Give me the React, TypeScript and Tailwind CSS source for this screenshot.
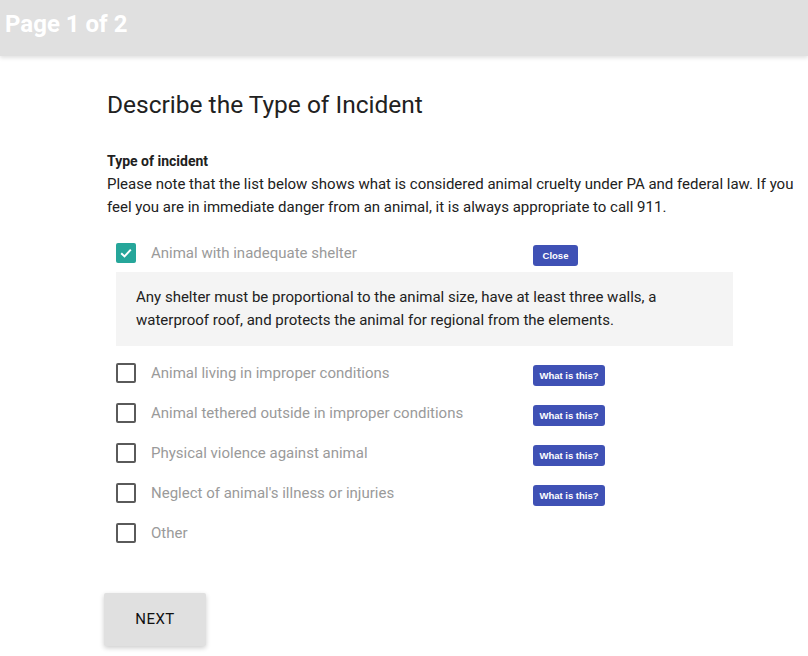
import React, { useState } from 'react';

const options = [
  {
    label: 'Animal with inadequate shelter',
    info: 'Any shelter must be proportional to the animal size, have at least three walls, a waterproof roof, and protects the animal for regional from the elements.',
  },
  { label: 'Animal living in improper conditions', info: 'Details about improper living conditions.' },
  { label: 'Animal tethered outside in improper conditions', info: 'Details about tethering.' },
  { label: 'Physical violence against animal', info: 'Details about physical violence.' },
  { label: "Neglect of animal's illness or injuries", info: 'Details about neglect.' },
  { label: 'Other', info: '' },
];

const App: React.FC = () => {
  const [checked, setChecked] = useState<boolean[]>([true, false, false, false, false, false]);
  const [open, setOpen] = useState<number | null>(0);

  const toggle = (i: number) => setChecked(prev => prev.map((v, j) => (j === i ? !v : v)));

  return (
    <div className="min-h-[656px] bg-white font-['Roboto',sans-serif]">
      <div className="h-[56px] bg-[#e0e0e0] shadow-[0_2px_4px_rgba(0,0,0,0.12)] flex items-center px-[5px]">
        <h1 className="text-white font-bold text-[24px] leading-none -mt-[8px]">Page 1 of 2</h1>
      </div>

      <div className="pl-[107px] pr-[12px]">
        <h2 className="text-[24.5px] text-[#212121] mt-[34px] leading-[30px]">Describe the Type of Incident</h2>

        <div className="mt-[31px] text-[15px] text-[#212121]">
          <p className="font-bold text-[14px] leading-[20px]">Type of incident</p>
          <p className="leading-[23px] mt-[2px]">
            Please note that the list below shows what is considered animal cruelty under PA and federal law. If you feel you are in immediate danger from an animal, it is always appropriate to call 911.
          </p>
        </div>

        <div className="mt-[14px] pl-[9px] w-[626px]">
          {options.map((o, i) => (
            <div key={o.label}>
              <div className="h-[40px] flex items-center">
                <button
                  onClick={() => toggle(i)}
                  className={`w-[20px] h-[20px] rounded-[2px] flex items-center justify-center ${checked[i] ? 'bg-[#26a69a]' : 'border-2 border-[#5a5a5a]'}`}
                >
                  {checked[i] && (
                    <svg width="14" height="14" viewBox="0 0 14 14" fill="none">
                      <path d="M2.2 7.3 L5.5 10.4 L11.8 3.6" stroke="white" strokeWidth="2" />
                    </svg>
                  )}
                </button>
                <span className="ml-[15px] text-[15px] text-[#9a9a9a] w-[382px]">{o.label}</span>
                {o.info && (
                  <button
                    onClick={() => setOpen(open === i ? null : i)}
                    className={`h-[21px] rounded-[3px] bg-[#3f51b5] text-white text-[9.5px] font-bold leading-none mt-[5px] font-['Liberation_Sans',sans-serif] ${open === i ? 'w-[45px]' : 'w-[72px]'}`}
                  >
                    {open === i ? 'Close' : 'What is this?'}
                  </button>
                )}
              </div>
              {open === i && (
                <div className="bg-[#f4f4f4] px-[20px] py-[14px] mb-[7px] text-[15px] leading-[23px] text-[#212121] -mt-[1px]">
                  {o.info}
                </div>
              )}
            </div>
          ))}
        </div>

        <button className="mt-[40px] -ml-[3px] w-[102px] h-[53px] bg-[#e0e0e0] rounded-[2px] shadow-[0_2px_5px_rgba(0,0,0,0.2)] text-[15px] text-[#111] tracking-[0.5px]">
          NEXT
        </button>
      </div>
    </div>
  );
};

export default App;
